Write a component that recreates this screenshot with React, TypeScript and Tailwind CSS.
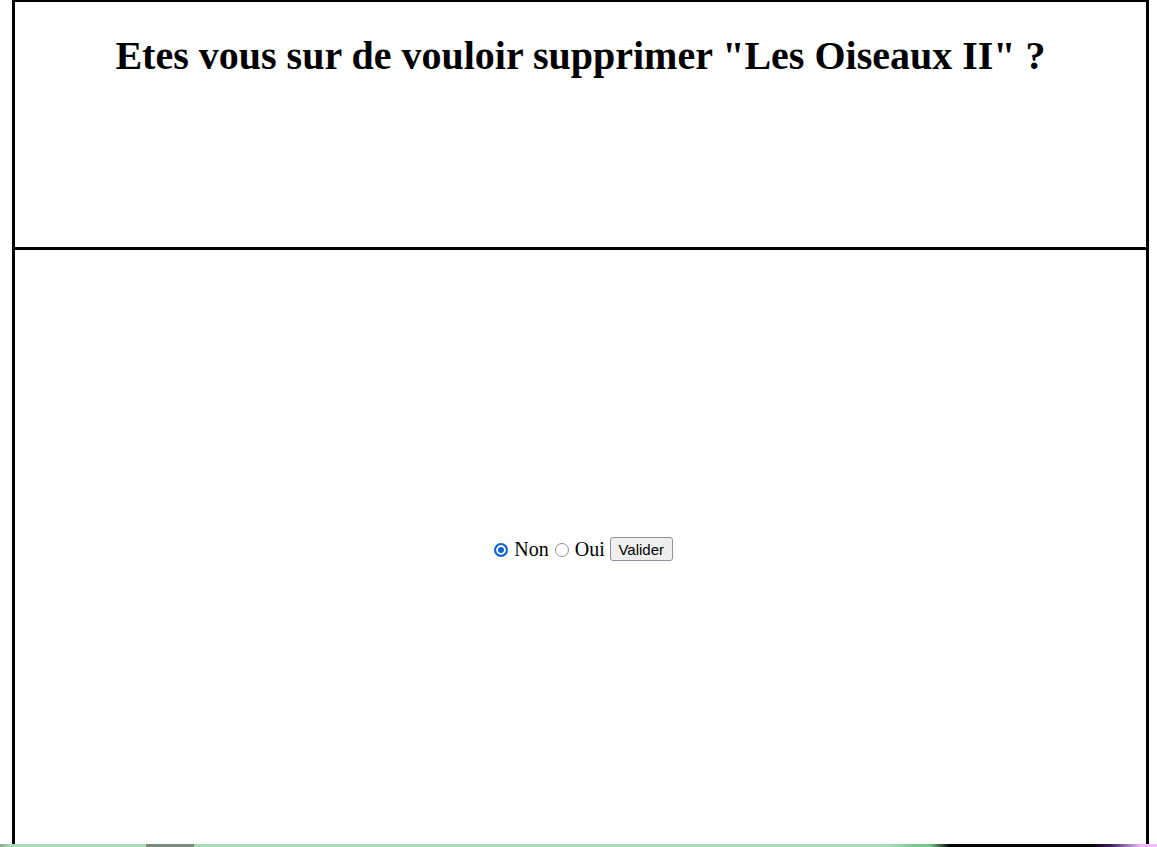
export default function App() {
  return (
    <div className="h-screen overflow-hidden bg-white font-['Liberation_Serif',serif] text-black">
      <div className="ml-[12px] mt-[-1px] w-[1137px] h-[860px] border-[3px] border-black flex flex-col">
        <div className="h-[248px] shrink-0 border-b-[3px] border-black">
          <h1 className="pt-[34px] text-center text-[40px] leading-[40px] font-bold">
            Etes vous sur de vouloir supprimer "Les Oiseaux II" ?
          </h1>
        </div>
        <div className="h-[598px] shrink-0 flex items-center justify-center">
          <form className="text-[20px] leading-[23px] flex items-center pl-[6px]">
            <input
              type="radio"
              name="choix"
              defaultChecked
              className="appearance-none w-[14px] h-[14px] rounded-full border-2 border-[#8f8f9d] bg-white checked:border-[#1062d8] checked:bg-[#1062d8] checked:shadow-[inset_0_0_0_2px_white] mt-[1px]"
            />
            <span className="ml-[6px]">Non</span>
            <input
              type="radio"
              name="choix"
              className="appearance-none w-[14px] h-[14px] rounded-full border-[1.5px] border-[#8f8f9d] bg-white checked:border-2 checked:border-[#1062d8] checked:bg-[#1062d8] checked:shadow-[inset_0_0_0_2px_white] ml-[6px] mt-[1px]"
            />
            <span className="ml-[6px]">Oui</span>
            <button
              type="button"
              className="ml-[5px] h-[24px] w-[63px] bg-[#efeff0] border border-[#8f8f9d] rounded-[3px] font-['Liberation_Sans',sans-serif] text-[15px] leading-[17px] text-black"
            >
              Valider
            </button>
          </form>
        </div>
      </div>
      <div className="fixed left-0 right-0 bottom-0 h-[3px] bg-[linear-gradient(to_right,#8ea990_0px,#acd8b8_10px,#acd8b8_146px,#7b8b7a_146px,#7b8b7a_194px,#acd8b8_194px,#acd8b8_890px,#7ac78a_915px,#7ac78a_930px,#000_950px,#000_1090px,#3a1d5a_1110px,#e9b8f5_1140px,#f0c0f8_1157px)]" />
    </div>
  );
}
